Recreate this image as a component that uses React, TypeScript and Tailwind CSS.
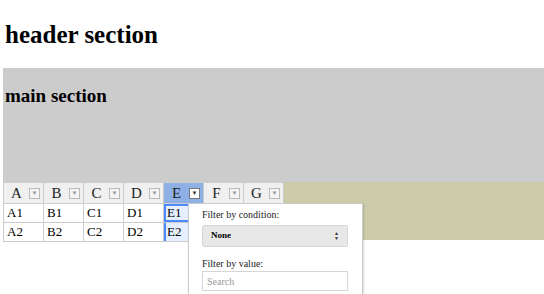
import React from 'react';

const columns = ['A', 'B', 'C', 'D', 'E', 'F', 'G'];
const rows = [1, 2];

const HeaderCell = ({ label, active }: { label: string; active: boolean }) => (
  <div
    className={`relative w-[40px] h-[21px] border-r border-b border-[#cccccc] flex items-center ${
      active ? 'bg-[#8eb0e7]' : 'bg-[#f0f0f0]'
    }`}
  >
    <span className="w-[25px] text-center text-[15px] leading-none text-[#222]">{label}</span>
    <span
      className={`w-[11px] h-[11px] border flex items-center justify-center text-[6px] leading-none ${
        active ? 'bg-white border-[#777] text-[#333]' : 'bg-[#f4f4f4] border-[#bbbbbb] text-[#999]'
      }`}
    >
      ▼
    </span>
  </div>
);

const App = () => {
  return (
    <div className="w-[544px] h-[294px] overflow-hidden bg-white font-['Liberation_Serif',serif] text-black">
      <h1 className="pt-[21px] pl-[5px] h-[68px] text-[25px] font-bold leading-[28px]">header section</h1>

      <div className="ml-[3px] h-[114px] bg-[#cccccc] pt-[16px] pl-[2px]">
        <h2 className="text-[19px] font-bold leading-[23px]">main section</h2>
      </div>

      <div className="relative ml-[3px] h-[58px] bg-[#cccbaa]">
        <div className="absolute left-0 top-0">
          <div className="flex border-l border-t border-[#cccccc]">
            {columns.map((c) => (
              <HeaderCell key={c} label={c} active={c === 'E'} />
            ))}
          </div>
          {rows.map((r) => (
            <div key={r} className="flex border-l border-[#cccccc]">
              {columns.slice(0, 5).map((c) => {
                const sel = c === 'E';
                return (
                  <div
                    key={c}
                    className={`w-[40px] h-[19px] border-r border-b border-[#cccccc] pl-[3px] text-[13px] leading-[18px] ${
                      sel ? 'bg-[#e6efff] shadow-[inset_2px_0_0_#4b89ff]' : 'bg-white'
                    } ${sel && r === 1 ? 'shadow-[inset_2px_2px_0_#4b89ff,inset_0_-2px_0_#4b89ff]' : ''}`}
                  >
                    {c}
                    {r}
                  </div>
                );
              })}
            </div>
          ))}
        </div>

        {/* filter dropdown */}
        <div className="absolute left-[185px] top-[21px] w-[175px] h-[100px] bg-white border border-[#cccccc] shadow-[1px_1px_2px_rgba(0,0,0,0.15)] px-[13px] pt-[4px]">
          <div className="text-[10px] leading-[14px] text-[#222]">Filter by condition:</div>
          <div className="mt-[3px] w-[146px] h-[22px] bg-[#e8e8e8] border border-[#d6d6d6] rounded-[2px] flex items-center justify-between pl-[8px] pr-[8px]">
            <span className="text-[9px] font-bold">None</span>
            <span className="flex flex-col items-center text-[5px] leading-[5px] text-[#333]">
              <span>▲</span>
              <span>▼</span>
            </span>
          </div>
          <div className="mt-[10px] text-[10px] leading-[14px] text-[#222]">Filter by value:</div>
          <div className="mt-0 w-[146px] h-[20px] border border-[#d6d6d6] flex items-center pl-[4px] text-[10px] text-[#999]">
            Search
          </div>
        </div>
      </div>
    </div>
  );
};

export default App;
